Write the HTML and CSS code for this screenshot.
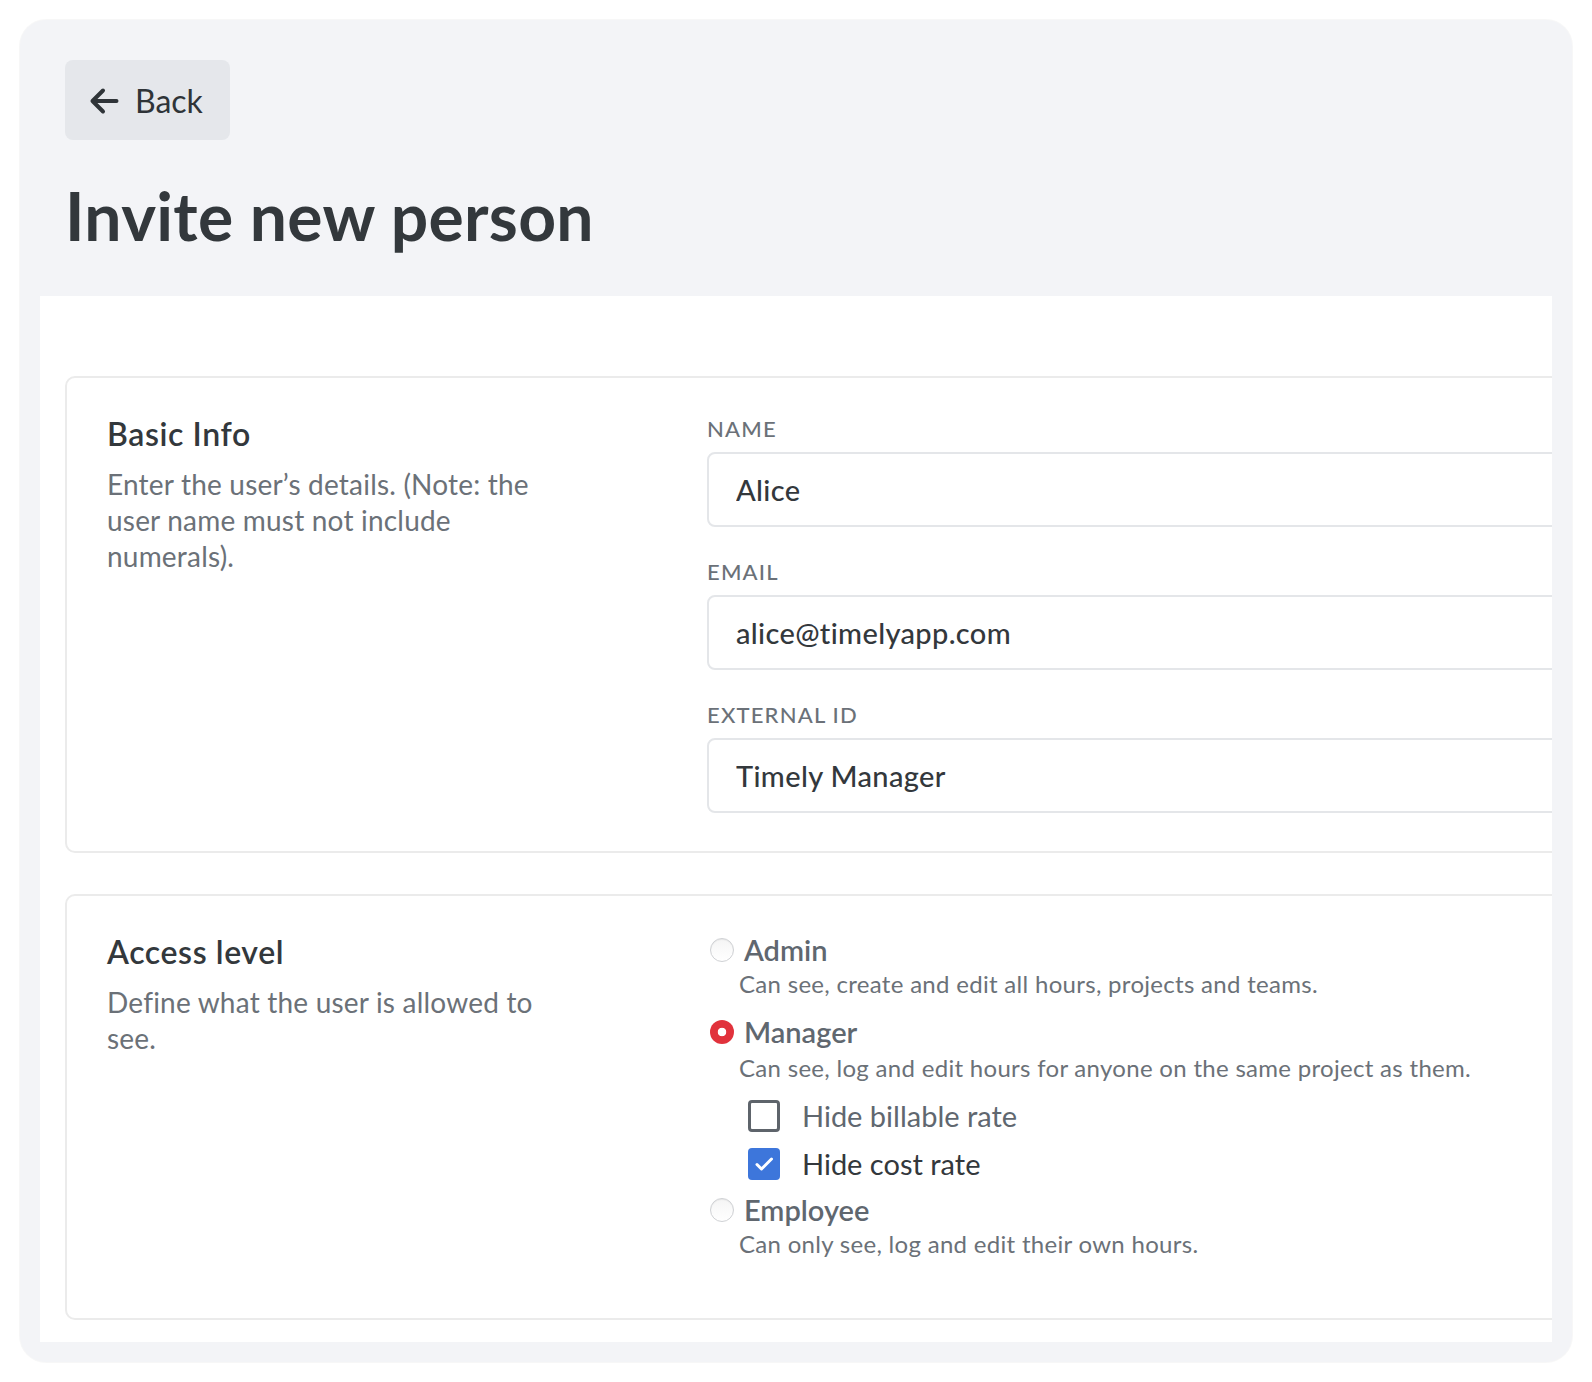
FILE: index.html
```html
<!DOCTYPE html>
<html lang="en">
<head>
<meta charset="utf-8">
<title>Invite new person</title>
<link rel="stylesheet" href="styles.css">
</head>
<body>
<div class="frame">
  <div class="header">
    <button class="back" type="button">
      <svg class="back-icon" width="30" height="28" viewBox="0 0 30 28" aria-hidden="true">
        <path d="M27.5 14H3.5M14 3.5L3.5 14L14 24.5" fill="none" stroke="#2f3438" stroke-width="4" stroke-linecap="round" stroke-linejoin="round"/>
      </svg>
      <span>Back</span>
    </button>
    <h1 class="title">Invite new person</h1>
  </div>
  <div class="panel">
    <section class="card card-basic">
      <div class="intro">
        <h2 class="intro-title">Basic Info</h2>
        <p class="intro-text">Enter the user’s details. (Note: the user name must not include numerals).</p>
      </div>
      <div class="fields">
        <div class="field">
          <label class="field-label">Name</label>
          <input class="field-input" type="text" value="Alice">
        </div>
        <div class="field">
          <label class="field-label">Email</label>
          <input class="field-input" type="text" value="alice@timelyapp.com">
        </div>
        <div class="field">
          <label class="field-label">External ID</label>
          <input class="field-input" type="text" value="Timely Manager">
        </div>
      </div>
    </section>
    <section class="card card-access">
      <div class="intro">
        <h2 class="intro-title">Access level</h2>
        <p class="intro-text">Define what the user is allowed to see.</p>
      </div>
      <div class="options">
        <div class="opt">
          <span class="radio"></span>
          <span class="opt-label">Admin</span>
        </div>
        <p class="opt-desc">Can see, create and edit all hours, projects and teams.</p>
        <div class="opt opt-gap">
          <span class="radio radio-on"></span>
          <span class="opt-label">Manager</span>
        </div>
        <p class="opt-desc opt-desc-low">Can see, log and edit hours for anyone on the same project as them.</p>
        <div class="checks">
          <div class="check-row">
            <span class="box"></span>
            <span class="check-label">Hide billable rate</span>
          </div>
          <div class="check-row">
            <span class="box box-on">
              <svg width="32" height="32" viewBox="0 0 32 32" aria-hidden="true">
                <path d="M9 16.5L13.5 21L23.5 11" fill="none" stroke="#fff" stroke-width="3" stroke-linecap="round" stroke-linejoin="round"/>
              </svg>
            </span>
            <span class="check-label check-label-on">Hide cost rate</span>
          </div>
        </div>
        <div class="opt opt-gap-small">
          <span class="radio"></span>
          <span class="opt-label">Employee</span>
        </div>
        <p class="opt-desc">Can only see, log and edit their own hours.</p>
      </div>
    </section>
  </div>
</div>
</body>
</html>
```
FILE: styles.css
```css
* { box-sizing: border-box; }
html, body { margin: 0; padding: 0; background: #ffffff; }
body {
  font-family: "Lato", "Liberation Sans", sans-serif;
  color: #33383c;
  width: 1592px;
  height: 1382px;
  overflow: hidden;
}
.frame {
  margin: 20px;
  height: 1342px;
  background: #f3f4f7;
  border-radius: 26px;
  padding: 40px 20px 20px 20px;
  display: flex;
  flex-direction: column;
  box-shadow: 0 0 0 1px rgba(0,0,0,0.03);
}
.header { padding: 0 25px; }
.back {
  display: flex;
  align-items: center;
  gap: 16px;
  width: 165px;
  height: 80px;
  padding: 0 0 0 24px;
  border: 0;
  border-radius: 8px;
  background: #e5e7eb;
  font-family: inherit;
  font-size: 32px;
  color: #2f3438;
  cursor: pointer;
}
.back-icon { display: block; flex: none; margin-top: 1px; }
.title {
  margin: 36px 0 0 0;
  font-size: 66px;
  line-height: 80px;
  font-weight: 700;
  color: #33383c;
  letter-spacing: 0.3px;
}
.panel {
  flex: 1;
  margin-top: 40px;
  background: #ffffff;
  padding: 80px 0 0 25px;
  overflow: hidden;
  display: flex;
  flex-direction: column;
  align-items: flex-start;
  gap: 41px;
}
.card {
  flex: none;
  width: 1560px;
  border: 2px solid #ebebeb;
  border-radius: 10px;
  display: grid;
  grid-template-columns: 600px 1fr;
}
.card-basic { padding: 38px 40px 38px 40px; }
.card-access { padding: 38px 40px 58px 40px; }
.intro-title {
  margin: 0;
  font-size: 32px;
  line-height: 36px;
  font-weight: 600;
  letter-spacing: 0.6px;
  color: #33383c;
}
.intro-text {
  margin: 14px 0 0 0;
  max-width: 450px;
  font-size: 28px;
  line-height: 36px;
  letter-spacing: 0.2px;
  color: #6b7178;
}
.field { margin-bottom: 32px; }
.field:last-child { margin-bottom: 0; }
.field-label {
  display: block;
  margin-bottom: 10px;
  font-size: 22px;
  line-height: 26px;
  font-weight: 500;
  text-transform: uppercase;
  letter-spacing: 1.2px;
  color: #6b7178;
}
.field-input {
  display: block;
  width: 100%;
  height: 75px;
  margin: 0;
  padding: 0 27px;
  border: 2px solid #e4e6e9;
  border-radius: 8px;
  background: #ffffff;
  font-family: inherit;
  font-size: 29px;
  font-weight: 500;
  letter-spacing: 0.35px;
  color: #33383c;
  outline: none;
}
.options { margin-top: -2px; }
.opt {
  display: flex;
  align-items: center;
  height: 36px;
}
.opt-gap { margin-top: 14px; }
.opt-gap-small { margin-top: 10px; }
.radio {
  flex: none;
  width: 24px;
  height: 24px;
  margin: 0 10px 0 3px;
  border-radius: 50%;
  border: 1.5px solid #cfd1d4;
  background: linear-gradient(#f5f5f5, #ffffff);
  box-shadow: inset 0 1px 1px rgba(0,0,0,0.06);
}
.radio-on {
  border: 0;
  background: radial-gradient(circle at center, #ffffff 0 4px, #e1323c 4.6px);
  box-shadow: none;
}
.opt-label {
  font-size: 29px;
  line-height: 36px;
  font-weight: 600;
  color: #60676f;
}
.opt-desc {
  margin: 0;
  padding-left: 32px;
  font-size: 24px;
  line-height: 32px;
  letter-spacing: 0.3px;
  color: #6b7178;
}
.opt-desc-low { margin-top: 2px; }
.checks {
  margin-top: 14px;
  padding-left: 41px;
  display: flex;
  flex-direction: column;
  gap: 12px;
}
.check-row {
  display: flex;
  align-items: center;
  gap: 22px;
  height: 36px;
}
.box {
  flex: none;
  width: 32px;
  height: 32px;
  border: 3px solid #5e646b;
  border-radius: 4px;
  background: #ffffff;
}
.box-on {
  border: 0;
  background: #3d76db;
}
.box-on svg { display: block; }
.check-label {
  font-size: 29px;
  line-height: 36px;
  color: #60676f;
}
.check-label-on { color: #33383c; }
```
